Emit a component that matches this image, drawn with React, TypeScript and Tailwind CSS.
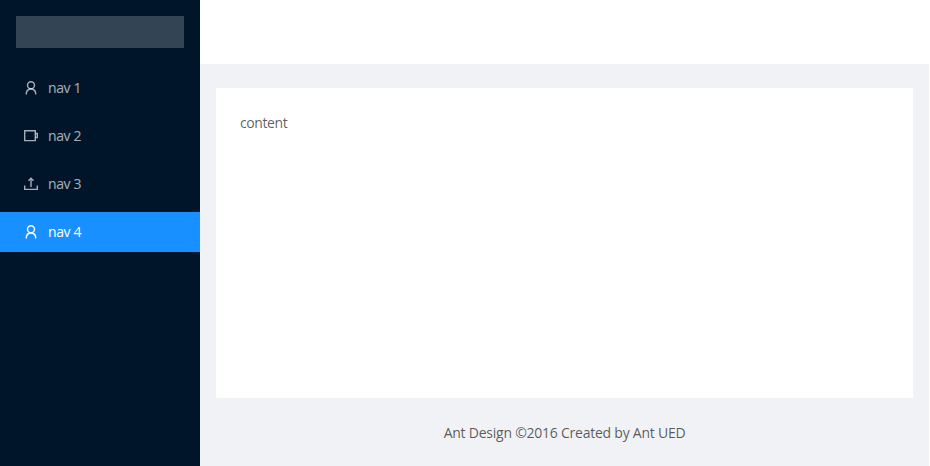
type IconName = "user" | "video" | "upload";

function NavIcon({ name }: { name: IconName }) {
  return (
    <svg width="14" height="14" viewBox="0 0 14 14" fill="none" stroke="currentColor" strokeWidth="1.4" className="shrink-0">
      {name === "user" && (
        <>
          <circle cx="7" cy="4.3" r="3.5" />
          <path d="M2.3 13.4v-.6c0-2.4 1.5-4.5 4.7-5 3.2.5 4.7 2.6 4.7 5v.6" />
        </>
      )}
      {name === "video" && (
        <>
          <path d="M.7 1.7h10.6v9.9H.7z" />
          <path d="M11.5 4.5h2v4h-2M13.3 4v5" />
        </>
      )}
      {name === "upload" && (
        <>
          <path d="M.7 8.6v3.8h12.6V8.6" />
          <path d="M7 10V1.5M4.5 3.7 7 1.2l2.5 2.5" />
        </>
      )}
    </svg>
  );
}

const items: { label: string; icon: IconName }[] = [
  { label: "nav 1", icon: "user" },
  { label: "nav 2", icon: "video" },
  { label: "nav 3", icon: "upload" },
  { label: "nav 4", icon: "user" },
];

export default function App() {
  return (
    <div className="flex h-[466px] w-[929px] overflow-hidden bg-[#f0f2f5] font-['Open_Sans','Noto_Sans',sans-serif] text-sm tracking-[-0.24px] text-black/65">
      <aside className="w-[200px] shrink-0 bg-[#001529]">
        <div className="m-4 h-8 bg-[#334454]" />
        <nav className="flex flex-col gap-2 pt-1">
          {items.map((item) => (
            <a
              key={item.label}
              className={`flex h-10 items-center gap-2.5 pl-6 tracking-[-0.4px] ${
                item.label === "nav 4" ? "bg-[#1890ff] font-medium text-white" : "text-white/65"
              }`}
            >
              <NavIcon name={item.icon} />
              <span>{item.label}</span>
            </a>
          ))}
        </nav>
      </aside>
      <div className="flex flex-1 flex-col">
        <header className="h-16 shrink-0 bg-white" />
        <main className="mx-4 mt-6 h-[310px] shrink-0 bg-white p-6 leading-[21px] tracking-[-0.4px]">content</main>
        <footer className="px-[50px] py-6 text-center leading-[21px]">Ant Design ©2016 Created by Ant UED</footer>
      </div>
    </div>
  );
}
